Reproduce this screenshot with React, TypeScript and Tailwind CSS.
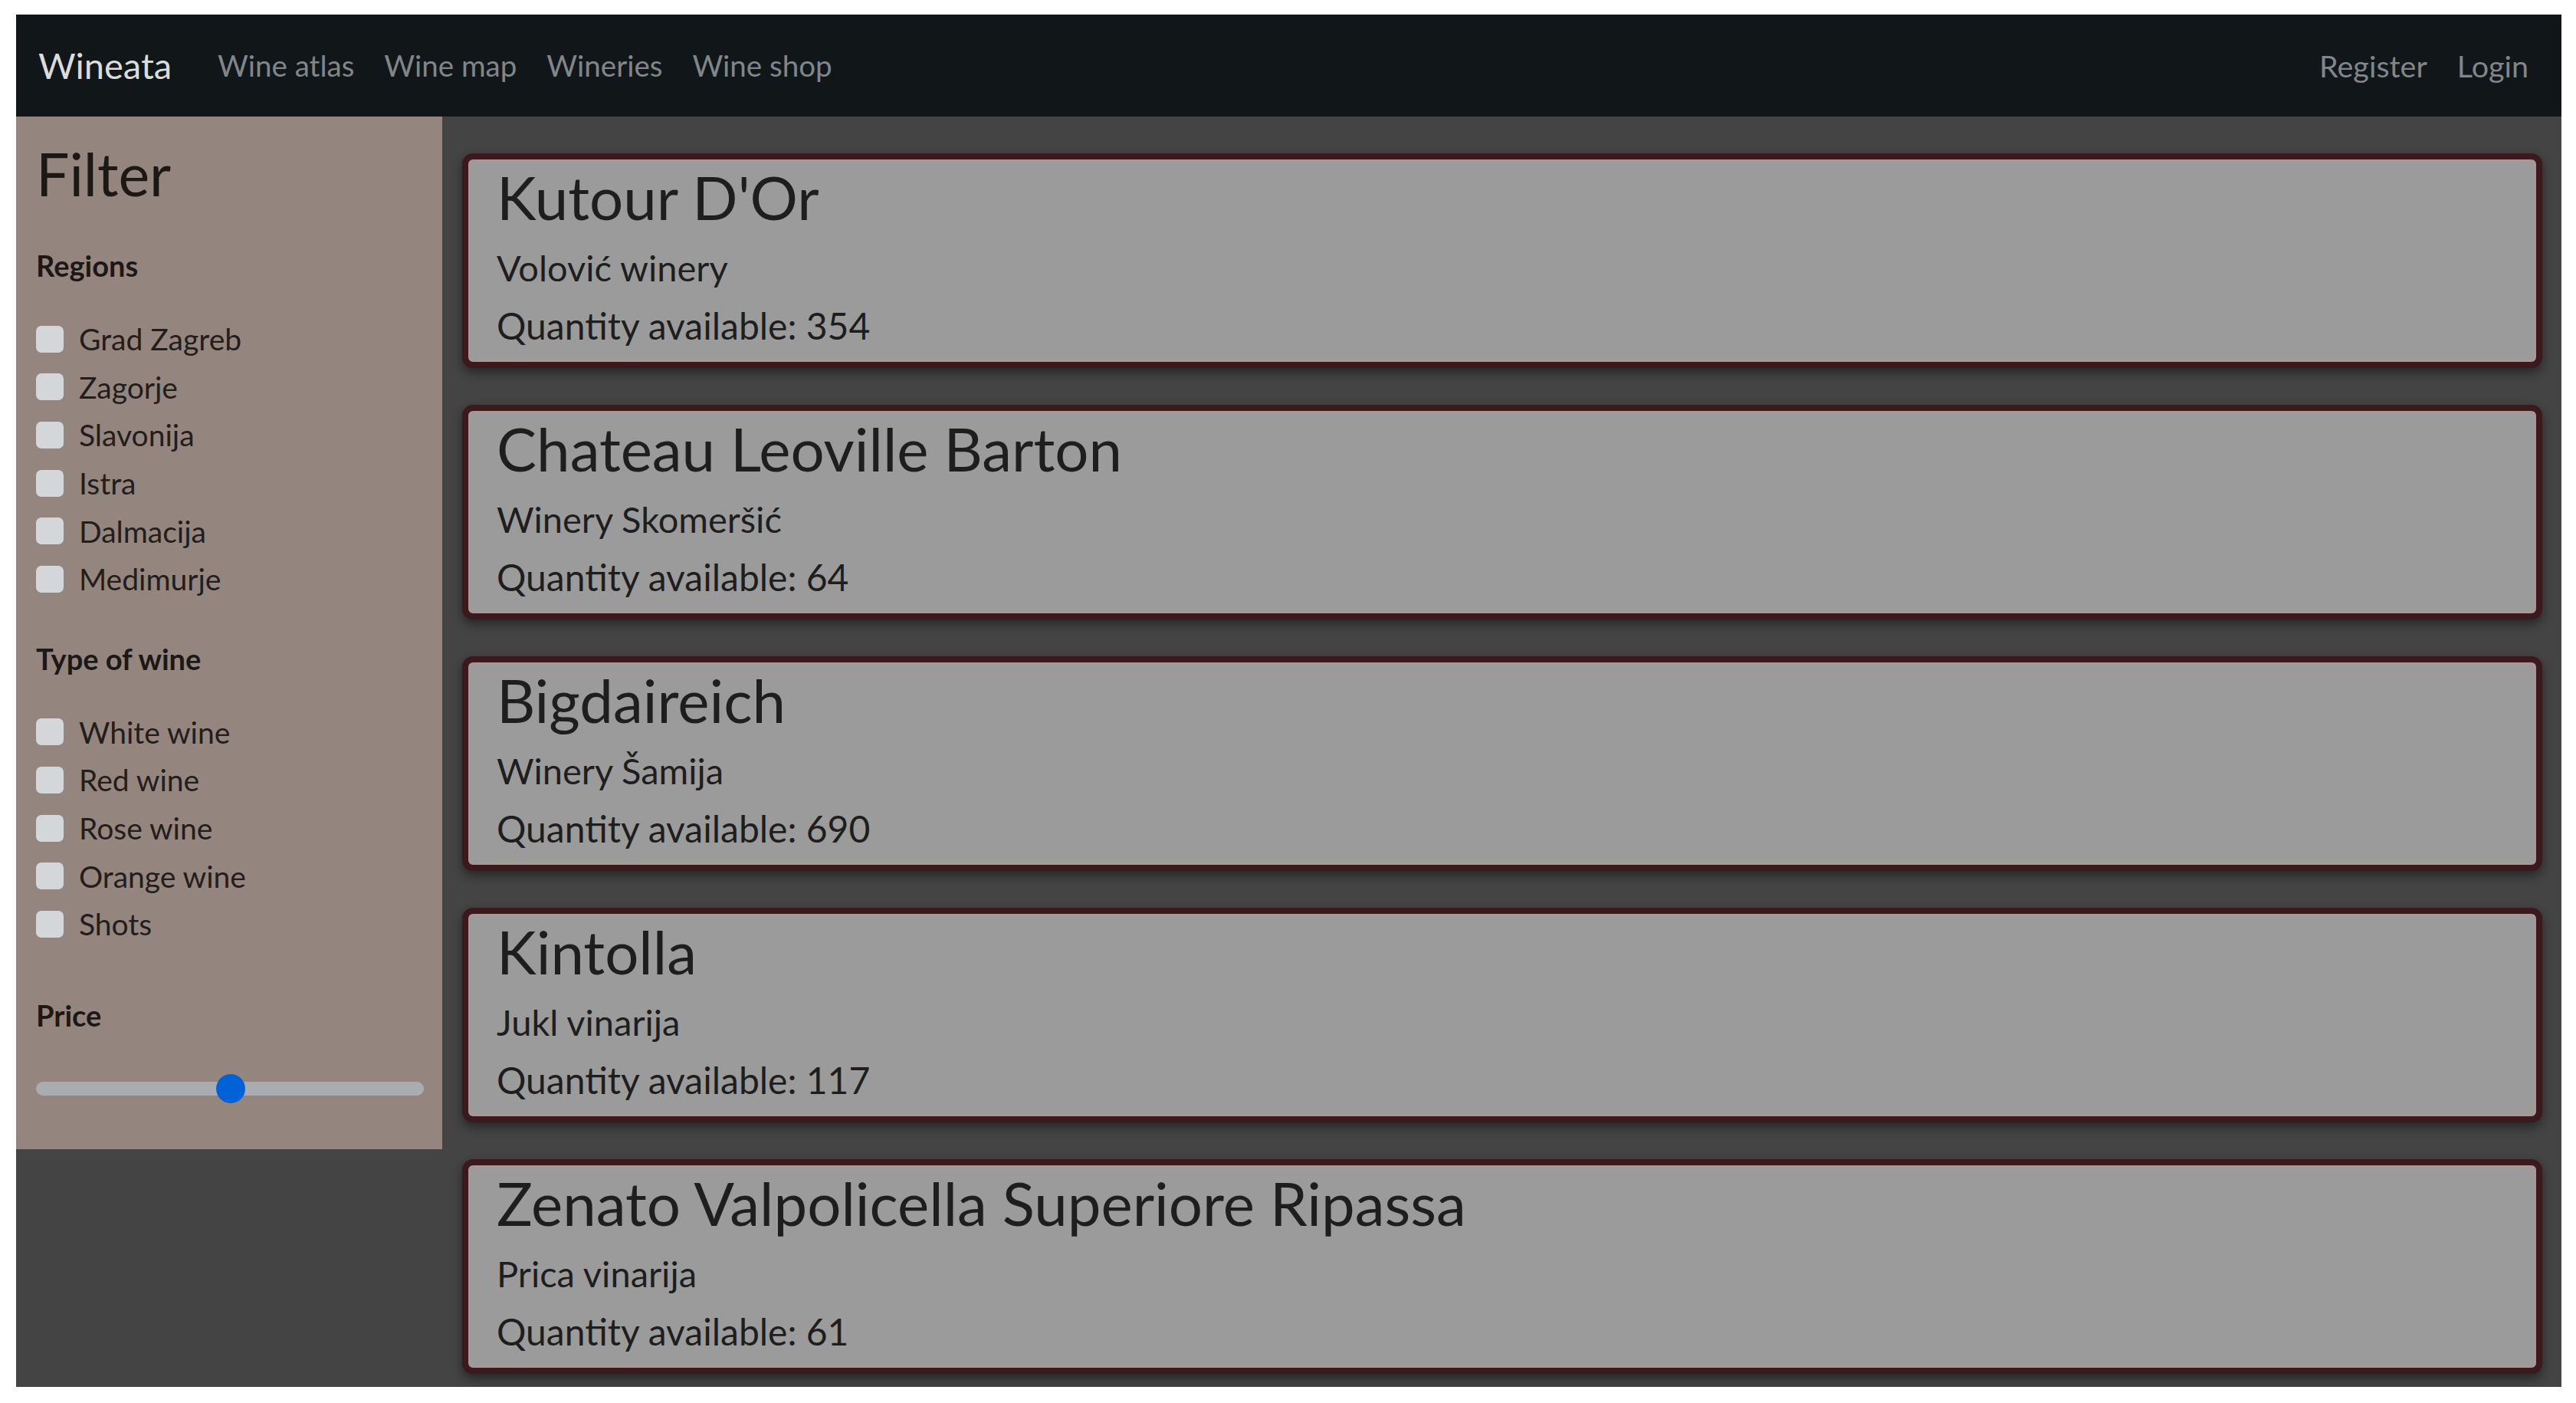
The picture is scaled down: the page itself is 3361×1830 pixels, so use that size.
import React from "react";

const regions = ["Grad Zagreb", "Zagorje", "Slavonija", "Istra", "Dalmacija", "Medimurje"];
const wineTypes = ["White wine", "Red wine", "Rose wine", "Orange wine", "Shots"];

const wines = [
  { name: "Kutour D'Or", winery: "Volović winery", quantity: 354 },
  { name: "Chateau Leoville Barton", winery: "Winery Skomeršić", quantity: 64 },
  { name: "Bigdaireich", winery: "Winery Šamija", quantity: 690 },
  { name: "Kintolla", winery: "Jukl vinarija", quantity: 117 },
  { name: "Zenato Valpolicella Superiore Ripassa", winery: "Prica vinarija", quantity: 61 },
];

const CheckRow = ({ label }: { label: string }) => (
  <label className="flex h-[62.6px] items-center gap-[20px]">
    <span className="h-[35px] w-[36px] shrink-0 rounded-[7px] bg-[#d4d7d9]" />
    <span className="text-[39px] leading-[62px] text-[#231d1b]">{label}</span>
  </label>
);

const Navbar = () => {
  const links = ["Wine atlas", "Wine map", "Wineries", "Wine shop"];
  return (
    <nav className="flex h-[133px] shrink-0 items-center bg-[#111719] pl-[29px] pr-[43px]">
      <a className="mr-[60px] text-[47px] text-[#dcdcdc]">Wineata</a>
      <div className="flex gap-[39px]">
        {links.map((l) => (
          <a key={l} className="text-[38.5px] text-[#80868a]">
            {l}
          </a>
        ))}
      </div>
      <div className="ml-auto flex gap-[39px]">
        <a className="text-[39.5px] text-[#80868a]">Register</a>
        <a className="text-[39.5px] text-[#80868a]">Login</a>
      </div>
    </nav>
  );
};

const Sidebar = () => (
  <aside className="w-[556px] shrink-0 self-start bg-[#94867f] pb-[60px] pl-[26px] pr-[24px] pt-[29px]">
    <h1 className="text-[77px] leading-[90px] text-[#1c1816]">Filter</h1>
    <h5 className="mt-[52px] text-[38px] font-bold leading-[46px] text-[#1c1816]">Regions</h5>
    <div className="mt-[42px] flex flex-col">
      {regions.map((r) => (
        <CheckRow key={r} label={r} />
      ))}
    </div>
    <h5 className="mt-[49px] text-[38px] font-bold leading-[46px] text-[#1c1816]">Type of wine</h5>
    <div className="mt-[42px] flex flex-col">
      {wineTypes.map((t) => (
        <CheckRow key={t} label={t} />
      ))}
    </div>
    <h5 className="mt-[64px] text-[38px] font-bold leading-[46px] text-[#1c1816]">Price</h5>
    <div className="relative mt-[54px] flex h-[38px] items-center">
      <div className="h-[18px] w-full rounded-full bg-[#a9adb0]" />
      <div className="absolute left-[235px] top-0 h-[38px] w-[38px] rounded-full bg-[#0062d6]" />
    </div>
  </aside>
);

const WineCard = ({ name, winery, quantity }: { name: string; winery: string; quantity: number }) => (
  <div className="h-[280px] shrink-0 rounded-[14px] border-[8px] border-[#3b191d] bg-[#9b9b9b] px-[37px] pt-[4px] text-[#1e1e1e] shadow-[inset_0_0_0_3px_#a99797,0_6px_14px_rgba(0,0,0,0.45)]">
    <h2 className="text-[78px] leading-[90px]">{name}</h2>
    <p className="mt-[9px] text-[47px] leading-[76px]">{winery}</p>
    <p className="text-[48px] leading-[76px]">Quantity available: {quantity}</p>
  </div>
);

export default function App() {
  return (
    <div className="h-[1830px] bg-white pb-[21px] pl-[21px] pr-[19px] pt-[19px] font-['Lato',sans-serif]">
      <div className="flex h-full flex-col overflow-hidden">
        <Navbar />
        <div className="flex min-h-0 flex-1 bg-[#444444]">
          <Sidebar />
          <main className="flex flex-1 flex-col gap-[48px] pl-[26px] pr-[25px] pt-[48px]">
            {wines.map((w) => (
              <WineCard key={w.name} {...w} />
            ))}
          </main>
        </div>
      </div>
    </div>
  );
}
